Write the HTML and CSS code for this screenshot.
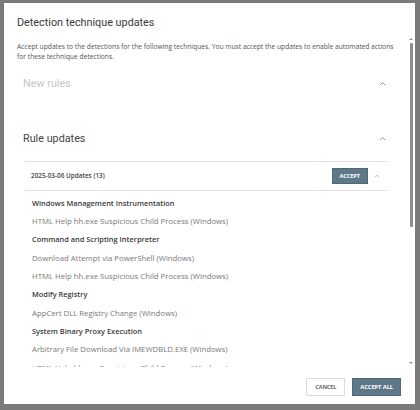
FILE: index.html
```html
<!DOCTYPE html>
<html lang="en">
<head>
<meta charset="utf-8">
<title>Detection technique updates</title>
<link rel="stylesheet" href="styles.css">
</head>
<body>
<div class="modal">
  <div class="modal-header">
    <h1 class="modal-title">Detection technique updates</h1>
  </div>
  <div class="modal-body">
    <div class="scroll-content">
      <p class="description">Accept updates to the detections for the following techniques. You must accept the updates to enable automated actions for these technique detections.</p>

      <div class="section">
        <div class="section-header muted">
          <span class="section-title">New rules</span>
          <svg class="chev" width="7" height="5" viewBox="0 0 7 5"><polyline points="1,4 3.5,1.5 6,4" fill="none" stroke="#9a9a9a" stroke-width="1"/></svg>
        </div>
      </div>

      <div class="section section-updates">
        <div class="section-header">
          <span class="section-title">Rule updates</span>
          <svg class="chev" width="7" height="5" viewBox="0 0 7 5"><polyline points="1,4 3.5,1.5 6,4" fill="none" stroke="#9a9a9a" stroke-width="1"/></svg>
        </div>

        <div class="group">
          <div class="group-row">
            <span class="group-title">2025-03-06 Updates (13)</span>
            <button class="btn btn-primary btn-small">ACCEPT</button>
            <svg class="chev-small" width="6" height="4" viewBox="0 0 6 4"><polyline points="1,3.2 3,1.2 5,3.2" fill="none" stroke="#b0b0b0" stroke-width="0.9"/></svg>
          </div>
          <ul class="items">
            <li class="technique">Windows Management Instrumentation</li>
            <li class="rule">HTML Help hh.exe Suspicious Child Process (Windows)</li>
            <li class="technique">Command and Scripting Interpreter</li>
            <li class="rule">Download Attempt via PowerShell (Windows)</li>
            <li class="rule">HTML Help hh.exe Suspicious Child Process (Windows)</li>
            <li class="technique">Modify Registry</li>
            <li class="rule">AppCert DLL Registry Change (Windows)</li>
            <li class="technique">System Binary Proxy Execution</li>
            <li class="rule">Arbitrary File Download Via IMEWDBLD.EXE (Windows)</li>
            <li class="rule">HTML Help hh.exe Suspicious Child Process (Windows)</li>
          </ul>
        </div>
      </div>
    </div>
    <div class="scrollbar">
      <span class="sb-arrow sb-up"></span>
      <span class="sb-thumb"></span>
      <span class="sb-spacer"></span>
      <span class="sb-arrow sb-down"></span>
    </div>
  </div>
  <div class="modal-footer">
    <button class="btn btn-secondary">CANCEL</button>
    <button class="btn btn-primary btn-large">ACCEPT ALL</button>
  </div>
</div>
</body>
</html>
```

FILE: styles.css
```css
* { box-sizing: border-box; }

html, body {
  margin: 0;
  height: 100%;
}

body {
  background: #7b7b7b;
  padding: 3px 5px 6px 4px;
  font-family: "Open Sans", "Noto Sans", sans-serif;
  color: #333;
}

.modal {
  background: #ffffff;
  height: 401px;
  display: flex;
  flex-direction: column;
}

.modal-header {
  height: 34px;
  padding: 13px 13px 0 13px;
  flex: none;
}

.modal-title {
  margin: 0;
  font-family: "Roboto", "Open Sans", sans-serif;
  font-weight: 400;
  font-size: 10.8px;
  line-height: 14px;
  color: #3a3a3a;
}

.modal-body {
  height: 330px;
  flex: none;
  display: flex;
  overflow: hidden;
}

.scroll-content {
  flex: 1;
  overflow: hidden;
  padding: 5px 10px 0 13px;
}

.description {
  margin: 0;
  font-size: 6.7px;
  line-height: 9.5px;
  color: #555;
  padding-right: 4px;
}

.section {
  margin: 8.7px 11px 0 6px;
}

.section-updates {
  margin-top: 27px;
}

.section-header {
  height: 28px;
  display: flex;
  align-items: center;
  justify-content: space-between;
  padding-right: 1px;
}

.section-title {
  font-family: "Roboto", "Open Sans", sans-serif;
  font-size: 10.8px;
  font-weight: 400;
  color: #454545;
}

.muted .section-title {
  color: #c6c6c6;
}

.chev { display: block; }

.group {
  margin: 8px 0 0 2px;
  border-top: 1px solid #e4e4e4;
}

.group-row {
  height: 29px;
  display: flex;
  align-items: center;
  padding-left: 6px;
  border-bottom: 1px solid #e4e4e4;
}

.group-title {
  flex: 1;
  font-size: 6.4px;
  font-weight: 600;
  color: #444;
}

.btn {
  font-family: "Open Sans", "Noto Sans", sans-serif;
  font-weight: 700;
  border-radius: 0;
  cursor: pointer;
  padding: 0;
  letter-spacing: -0.1px;
}

.btn-primary {
  background: #5f7887;
  color: #ffffff;
  border: 1px solid #4f6877;
}

.btn-small {
  width: 36.5px;
  height: 16px;
  font-size: 5.6px;
}

.chev-small {
  display: block;
  margin: 0 7px 0 6px;
}

.items {
  list-style: none;
  margin: 0;
  padding: 3px 0 0 7px;
}

.items li {
  height: 18.33px;
  line-height: 18.33px;
  white-space: nowrap;
}

.technique {
  font-size: 7.4px;
  font-weight: 600;
  color: #3a3a3a;
}

.rule {
  font-size: 7.75px;
  color: #7a7a7a;
}

.scrollbar {
  width: 7px;
  flex: none;
  display: flex;
  flex-direction: column;
  align-items: center;
  padding: 0 1px 0 0;
}

.sb-arrow {
  width: 0;
  height: 0;
  border-left: 2px solid transparent;
  border-right: 2px solid transparent;
  flex: none;
}

.sb-up {
  margin-top: 1px;
  border-bottom: 2.5px solid #8d8d8d;
}

.sb-down {
  margin-bottom: 3px;
  border-top: 2.5px solid #8d8d8d;
}

.sb-thumb {
  width: 3px;
  height: 184px;
  margin-top: 2.5px;
  background: #8c8c8c;
  border-radius: 1px;
  flex: none;
}

.sb-spacer { flex: 1; }

.modal-footer {
  flex: 1;
  display: flex;
  justify-content: flex-end;
  align-items: flex-start;
  gap: 7px;
  padding: 11px 14px 0 0;
}

.btn-secondary {
  background: #ffffff;
  color: #6a6a6a;
  border: 1px solid #dcdcdc;
  width: 39px;
  height: 17.5px;
  font-size: 5.6px;
}

.btn-large {
  width: 48.7px;
  height: 17.5px;
  font-size: 5.8px;
}
```
